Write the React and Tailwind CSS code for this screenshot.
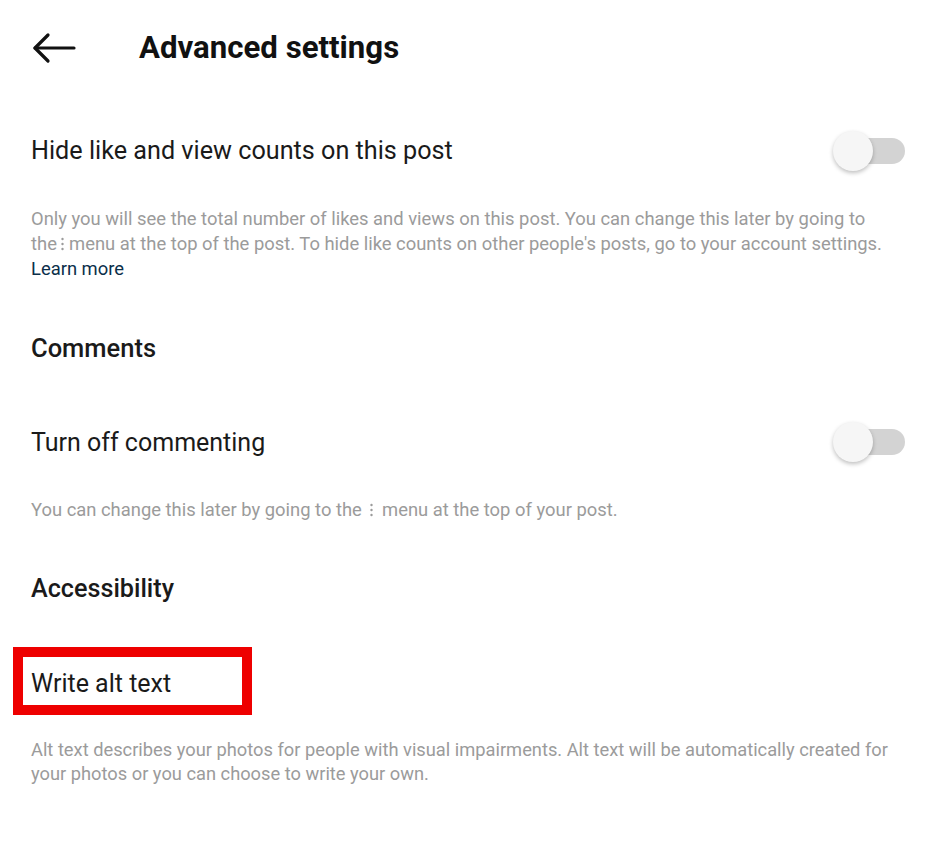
import React from 'react';

const Toggle = () => (
    <div className="relative w-[72px] h-[40px] shrink-0">
        <div className="absolute left-[8px] right-0 top-[7px] h-[26px] rounded-full bg-[#d3d3d3]" />
        <div className="absolute left-0 top-0 w-[40px] h-[40px] rounded-full bg-[#f6f6f6] shadow-[0_2px_4px_rgba(0,0,0,0.25)]" />
    </div>
);

const BackArrow = () => (
    <svg width="44" height="32" viewBox="0 0 44 32" fill="none" stroke="#111" strokeWidth="3.2" strokeLinecap="round" strokeLinejoin="round">
        <path d="M42 16H3" />
        <path d="M16 3L3 16l13 13" />
    </svg>
);

// small vertical "more" dots used inline in the hints
const Dots = ({ className }) => (
    <svg className={className} width="3" height="14" viewBox="0 0 3 14" fill="#9b9b9b">
        <circle cx="1.5" cy="2" r="1.2" />
        <circle cx="1.5" cy="7" r="1.2" />
        <circle cx="1.5" cy="12" r="1.2" />
    </svg>
);

const App = () => {
    return (
        <div className="w-[945px] min-h-[843px] bg-white text-[#1a1a1a] font-['Roboto',sans-serif]">
            <div className="h-[96px] flex items-center">
                <div className="w-[139px] pl-[32px] flex items-center">
                    <BackArrow />
                </div>
                <h1 className="text-[31.2px] font-bold leading-none text-[#111]">Advanced settings</h1>
            </div>

            <div className="pl-[31px] pr-[40px]">
                <div className="h-[110px] flex items-center justify-between">
                    <span className="text-[25.2px] leading-none">Hide like and view counts on this post</span>
                    <Toggle />
                </div>
                <p className="text-[18.4px] leading-[25px] text-[#9b9b9b] whitespace-nowrap">
                    Only you will see the total number of likes and views on this post. You can change this later by going to
                    <br />
                    the <Dots className="inline-block align-[-1px]" /> menu at the top of the post. To hide like counts on other people's posts, go to your account settings.
                    <br />
                    <span className="text-[#0b2f4a]">Learn more</span>
                </p>

                <h2 className="mt-[52px] h-[30px] flex items-center text-[25.5px] font-medium">Comments</h2>

                <div className="mt-[24px] h-[110px] flex items-center justify-between">
                    <span className="text-[25px] leading-none">Turn off commenting</span>
                    <Toggle />
                </div>
                <p className="text-[18.4px] leading-[25px] text-[#9b9b9b]">
                    You can change this later by going to the <Dots className="inline-block align-[-1px] mx-[4px]" /> menu at the top of your post.
                </p>

                <h2 className="mt-[52px] h-[30px] flex items-center text-[25.2px] font-medium">Accessibility</h2>

                <div className="mt-[43px] ml-[-18px] w-[239px] h-[68px] border-[10px] border-[#ee0000] flex items-center pl-[8px] pt-[4px]">
                    <span className="text-[25px] leading-none">Write alt text</span>
                </div>

                <p className="mt-[23px] text-[18.3px] leading-[24px] text-[#9b9b9b] whitespace-nowrap">
                    Alt text describes your photos for people with visual impairments. Alt text will be automatically created for
                    <br />
                    your photos or you can choose to write your own.
                </p>
            </div>
        </div>
    );
};

export default App;
